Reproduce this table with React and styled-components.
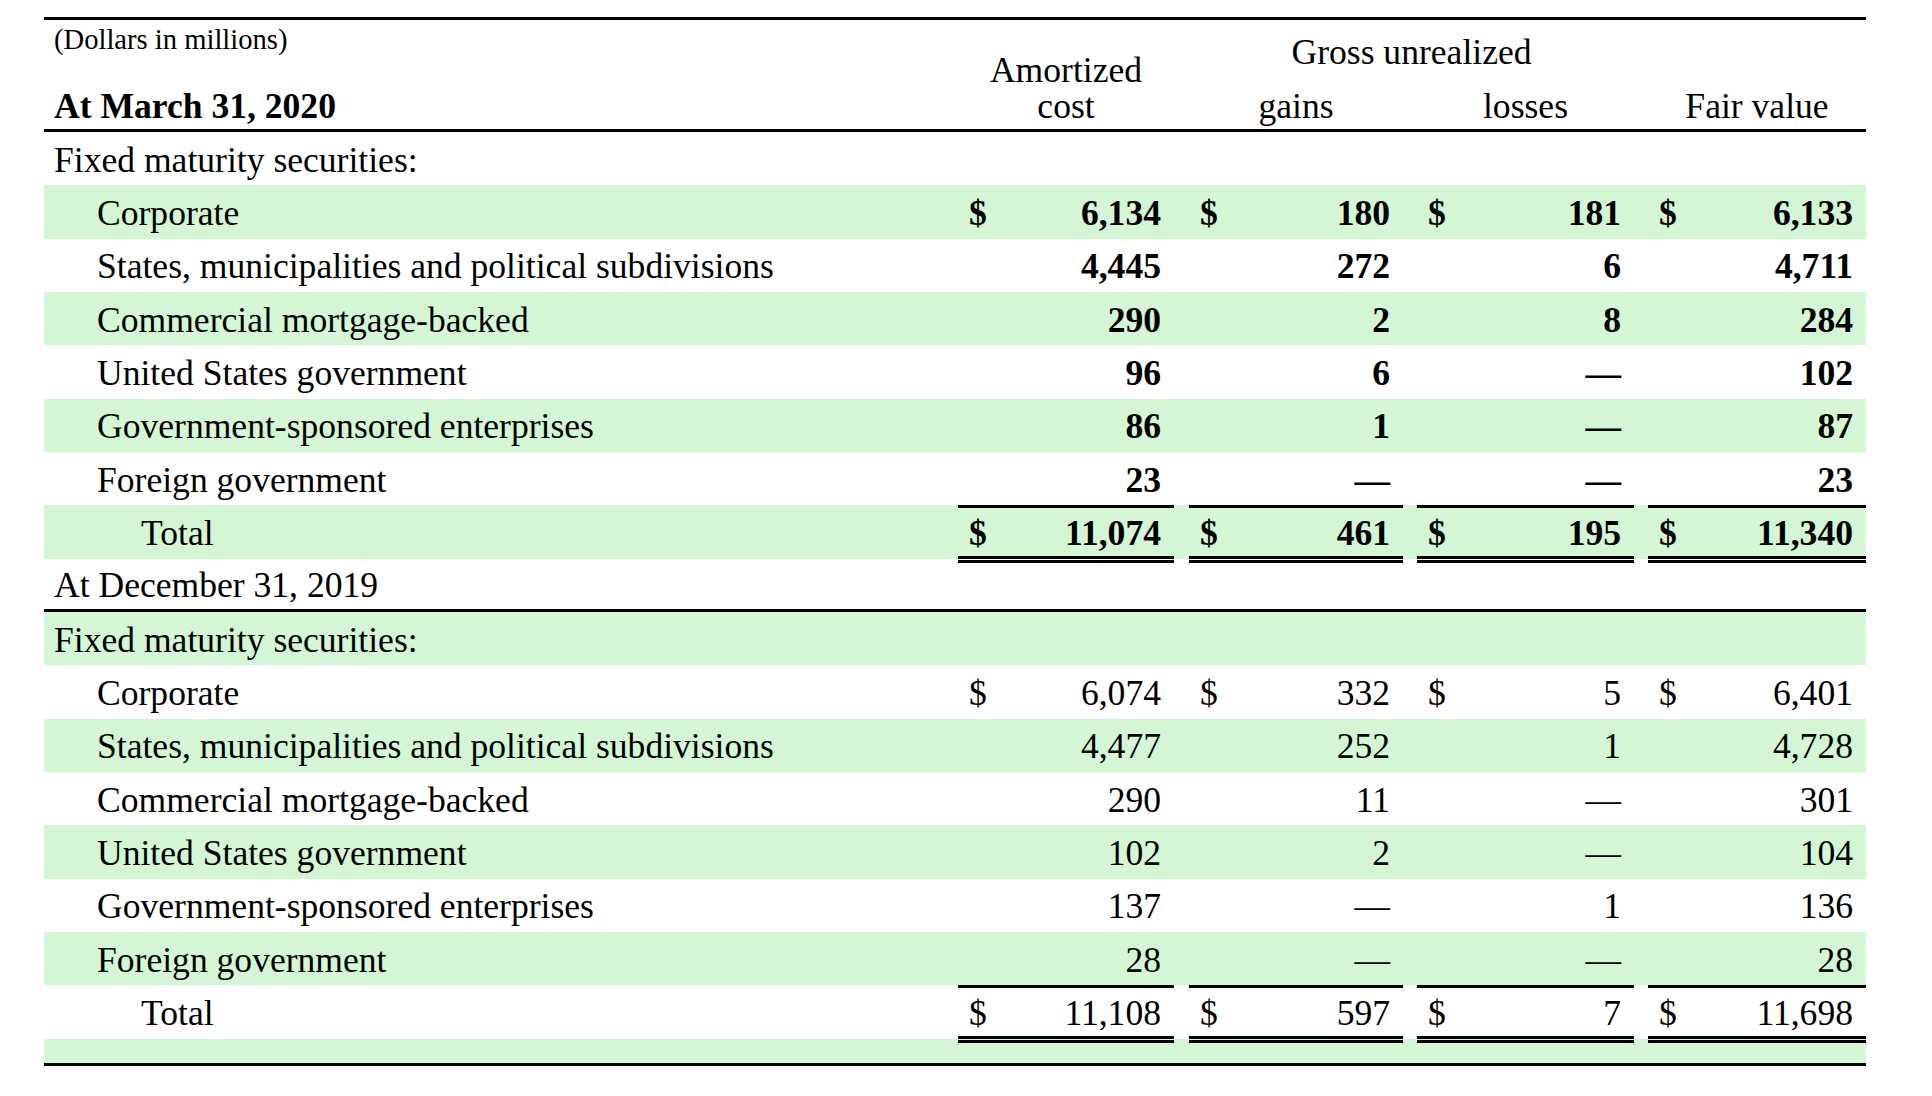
import React from "react";
import styled, { createGlobalStyle } from "styled-components";

const GREEN = "#d4f6d4";
const COLS = "900px 14px 216px 15px 214px 14px 217px 14px 218px";

const GlobalStyle = createGlobalStyle`
  html, body {
    margin: 0;
    padding: 0;
    background: #fff;
  }
  body {
    font-family: "Liberation Serif", "Times New Roman", serif;
    color: #000;
  }
`;

const Sheet = styled.div`
  width: 1822px;
  margin: 17px 0 0 44px;
  border-top: 3px solid #000;
  border-bottom: 3px solid #000;
  font-size: 35.6px;
`;

const Head = styled.div`
  display: grid;
  grid-template-columns: ${COLS};
  grid-template-rows: 68px 41px;
  border-bottom: 3px solid #000;
`;

const Unit = styled.div`
  grid-column: 1;
  grid-row: 1;
  align-self: start;
  padding: 5px 0 0 10px;
  font-size: 28.6px;
  line-height: 30px;
`;

const Period = styled.div`
  grid-column: 1;
  grid-row: 2;
  align-self: end;
  padding: 0 0 5px 10px;
  line-height: 36px;
  font-weight: bold;
`;

const ColHead = styled.div`
  grid-column: ${(p) => p.$col};
  grid-row: ${(p) => p.$row || 2};
  align-self: ${(p) => (p.$top ? "start" : "end")};
  padding: ${(p) => (p.$top ? "14px 0 0" : "0 0 5px")};
  line-height: 36px;
  text-align: center;
`;

const Row = styled.div`
  display: grid;
  grid-template-columns: ${COLS};
  box-sizing: border-box;
  height: ${(p) => p.$h || "53.33px"};
  background: ${(p) => (p.$shade ? GREEN : "transparent")};
  border-bottom: ${(p) => (p.$rule ? "3px solid #000" : "none")};
`;

const Label = styled.div`
  display: flex;
  align-items: center;
  padding: 2px 0 0 ${(p) => p.$indent || 10}px;
  white-space: nowrap;
`;

const Num = styled.div`
  position: relative;
  box-sizing: border-box;
  display: flex;
  align-items: center;
  justify-content: space-between;
  padding: 2px 13px 0 11px;
  font-weight: ${(p) => (p.$bold ? "bold" : "normal")};
  border-top: ${(p) => (p.$total ? "3px solid #000" : "none")};
  border-bottom: ${(p) => (p.$total ? "3px solid #000" : "none")};
  white-space: nowrap;

  &::after {
    content: "";
    display: ${(p) => (p.$total ? "block" : "none")};
    position: absolute;
    left: 0;
    right: 0;
    bottom: -7px;
    height: 3px;
    background: #000;
  }
`;

const data2020 = [
  ["Corporate", ["6,134", "180", "181", "6,133"], true],
  ["States, municipalities and political subdivisions", ["4,445", "272", "6", "4,711"]],
  ["Commercial mortgage-backed", ["290", "2", "8", "284"]],
  ["United States government", ["96", "6", "—", "102"]],
  ["Government-sponsored enterprises", ["86", "1", "—", "87"]],
  ["Foreign government", ["23", "—", "—", "23"]],
];
const total2020 = ["11,074", "461", "195", "11,340"];

const data2019 = [
  ["Corporate", ["6,074", "332", "5", "6,401"], true],
  ["States, municipalities and political subdivisions", ["4,477", "252", "1", "4,728"]],
  ["Commercial mortgage-backed", ["290", "11", "—", "301"]],
  ["United States government", ["102", "2", "—", "104"]],
  ["Government-sponsored enterprises", ["137", "—", "1", "136"]],
  ["Foreign government", ["28", "—", "—", "28"]],
];
const total2019 = ["11,108", "597", "7", "11,698"];

const ValueRow = ({ label, values, dollar, bold, total, shade, indent }) => (
  <Row $shade={shade}>
    <Label $indent={indent}>{label}</Label>
    {values.map((v, i) => (
      <React.Fragment key={i}>
        <div />
        <Num $bold={bold} $total={total}>
          <span>{dollar ? "$" : ""}</span>
          <span>{v}</span>
        </Num>
      </React.Fragment>
    ))}
  </Row>
);

const Section = ({ rows, totals, bold, startShade }) => (
  <>
    {rows.map(([label, values, dollar], i) => (
      <ValueRow
        key={label}
        label={label}
        values={values}
        dollar={dollar}
        bold={bold}
        indent={53}
        shade={i % 2 === 0 ? startShade : !startShade}
      />
    ))}
    <ValueRow
      label="Total"
      values={totals}
      dollar
      bold={bold}
      total
      indent={97}
      shade={rows.length % 2 === 0 ? startShade : !startShade}
    />
  </>
);

export default function App() {
  return (
    <>
      <GlobalStyle />
      <Sheet>
        <Head>
          <Unit>(Dollars in millions)</Unit>
          <Period>At March 31, 2020</Period>
          <ColHead $col={3} $row="1 / 3">
            Amortized
            <br />
            cost
          </ColHead>
          <ColHead $col="5 / 8" $row={1} $top>
            Gross unrealized
          </ColHead>
          <ColHead $col={5}>gains</ColHead>
          <ColHead $col={7}>losses</ColHead>
          <ColHead $col={9}>Fair value</ColHead>
        </Head>

        <Row>
          <Label>Fixed maturity securities:</Label>
        </Row>
        <Section rows={data2020} totals={total2020} bold startShade />

        <Row $rule>
          <Label>At December 31, 2019</Label>
        </Row>
        <Row $shade>
          <Label>Fixed maturity securities:</Label>
        </Row>
        <Section rows={data2019} totals={total2019} startShade={false} />
        <Row $shade $h="24px" />
      </Sheet>
    </>
  );
}
